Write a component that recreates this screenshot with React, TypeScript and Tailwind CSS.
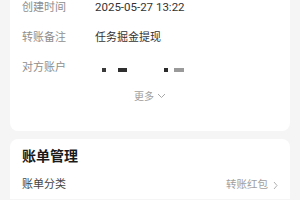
import React from 'react';

const font = { fontFamily: '"Roboto", "Noto Sans CJK SC", sans-serif' };

const InfoRow: React.FC<{ label: string; children: React.ReactNode }> = ({ label, children }) => (
  <div className="flex h-[30px] items-center">
    <span className="w-[73px] shrink-0 text-[11px] text-[#8e8e8e]">{label}</span>
    <div className="text-[11px] text-[#333333]">{children}</div>
  </div>
);

export default function App() {
  return (
    <div className="h-[200px] w-[300px] overflow-hidden bg-[#f5f5f5] px-[10px]" style={font}>
      <div className="rounded-b-[8px] bg-white px-[12px] pb-[22px]">
        <div className="-mt-[7px] flex flex-col">
          <InfoRow label="创建时间">
            <span className="text-[11.5px]">2025-05-27 13:22</span>
          </InfoRow>
          <InfoRow label="转账备注">任务掘金提现</InfoRow>
          <InfoRow label="对方账户">
            <div className="flex items-center pt-[3px]">
              <span className="ml-[7px] h-[4px] w-[4px] bg-[#3a3a3a]" />
              <span className="ml-[12px] h-[4px] w-[9px] bg-[#2f2f2f]" />
              <span className="ml-[37px] h-[4px] w-[4px] bg-[#2a2a2a]" />
              <span className="ml-[6px] h-[4px] w-[10px] bg-[#9a9a9a]" />
            </div>
          </InfoRow>
        </div>
        <div className="flex h-[26px] items-center justify-center gap-[3px] text-[10px] text-[#a0a0a0]">
          <span>更多</span>
          <svg width="9" height="6" viewBox="0 0 9 6" fill="none">
            <path d="M1 1l3.5 3.5L8 1" stroke="#a8a8a8" strokeWidth="1" />
          </svg>
        </div>
      </div>
      <div className="mt-[8px] rounded-t-[8px] bg-white px-[12px] pt-[7px]">
        <div className="flex h-[20px] items-center text-[14px] font-bold text-[#1a1a1a]">账单管理</div>
        <div className="mt-[5px] flex h-[28px] items-center justify-between">
          <span className="text-[11px] text-[#444444]">账单分类</span>
          <span className="flex items-center gap-[5px] text-[10.5px] text-[#a0a0a0]">
            转账红包
            <svg width="5" height="9" viewBox="0 0 5 9" fill="none">
              <path d="M1 1l3 3.5L1 8" stroke="#b0b0b0" strokeWidth="1" />
            </svg>
          </span>
        </div>
      </div>
    </div>
  );
}
